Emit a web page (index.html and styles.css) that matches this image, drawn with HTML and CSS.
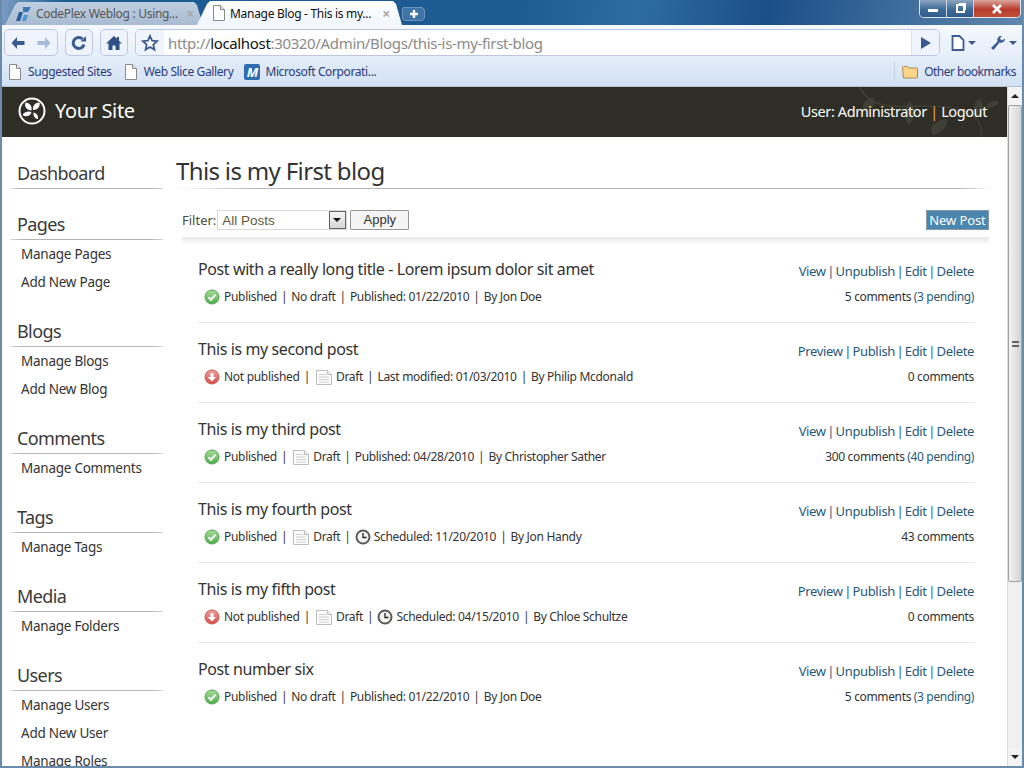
FILE: index.html
```html
<!DOCTYPE html>
<html lang="en">
<head>
  <meta charset="UTF-8" />
  <title>Manage Blog - This is my First blog</title>
  <link rel="stylesheet" href="styles.css">
</head>
<body>
  <svg class="sprites" width="0" height="0">
    <defs>
      <linearGradient id="okFill" x1="0" y1="0" x2="0" y2="1"><stop offset="0" stop-color="#a6dc96"/><stop offset="1" stop-color="#4fae4a"/></linearGradient>
      <linearGradient id="noFill" x1="0" y1="0" x2="0" y2="1"><stop offset="0" stop-color="#f3a09a"/><stop offset="1" stop-color="#da4a44"/></linearGradient>
    </defs>
    <symbol id="page" viewBox="0 0 14 16"><path d="M1.5.5h7l4 4v11h-11z" fill="#fff" stroke="#8a8a8a"/><path d="M8.5.5v4h4" fill="#e8e8e8" stroke="#8a8a8a"/></symbol>
    <symbol id="ok" viewBox="0 0 16 16"><circle cx="8" cy="8" r="7" fill="url(#okFill)" stroke="#5aa355"/><path d="M4.500 8.200l2.500 2.500 4.500-5" fill="none" stroke="#fff" stroke-width="2"/></symbol>
    <symbol id="no" viewBox="0 0 16 16"><circle cx="8" cy="8" r="7" fill="url(#noFill)" stroke="#c25a55"/><path d="M6.500 4h3v4h2.500L8 12.500 3.500 8h3z" fill="#fff"/></symbol>
    <symbol id="draft" viewBox="0 0 16 15"><path d="M.5.5h11l4 4v10H.5z" fill="#fbfbfb" stroke="#bdbdbd"/><path d="M11.500.5v4h4" fill="#eee" stroke="#bdbdbd"/><path d="M3 4.500h7M3 7h10M3 9.500h10M3 12h10" stroke="#cfcfcf"/></symbol>
    <symbol id="clock" viewBox="0 0 16 16"><circle cx="8" cy="8" r="6.500" fill="#f4f4f4" stroke="#5a5a5a" stroke-width="2"/><path d="M8 4v4.500h3.500" fill="none" stroke="#222" stroke-width="1.300"/></symbol>
  </svg>

  <div class="window">
    <div class="titlebar">
      <div class="tab">
        <svg class="tab-icon" width="16" height="16" viewBox="0 0 16 16"><path d="M7 1h8l-3 5H7z" fill="#3b78b5"/><path d="M3 6h4L4 15H0z" fill="#2a5f9c"/><path d="M8 9h4l-2 6H6z" fill="#4f97d1"/></svg>
        <span class="tab-title">CodePlex Weblog : Using...</span>
        <span class="tab-close">×</span>
      </div>
      <div class="tab active">
        <svg class="tab-icon" width="14" height="16"><use href="#page"/></svg>
        <span class="tab-title">Manage Blog - This is my...</span>
        <span class="tab-close">×</span>
      </div>
      <div class="new-tab">
        <svg width="10" height="10" viewBox="0 0 10 10"><path d="M5 1v8M1 5h8" stroke="#fff" stroke-width="2.400"/></svg>
      </div>
      <div class="win-controls">
        <div class="win-btn"><span class="win-min"></span></div>
        <div class="win-btn"><span class="win-max"></span></div>
        <div class="win-btn win-close">
          <svg width="12" height="10" viewBox="0 0 12 10"><path d="M2 1l8 8M10 1l-8 8" stroke="#fff" stroke-width="2.600"/></svg>
        </div>
      </div>
    </div>

    <div class="toolbar">
      <div class="tool-group">
        <div class="tool-btn"><svg width="16" height="14" viewBox="0 0 16 14"><path d="M7 1L1.500 7 7 13V9h7.500V5H7z" fill="#3a5a90"/></svg></div>
        <div class="tool-btn"><svg width="16" height="14" viewBox="0 0 16 14"><path d="M9 1l5.500 6L9 13V9H1.500V5H9z" fill="#a9bbdd"/></svg></div>
      </div>
      <div class="tool-group">
        <div class="tool-btn"><svg width="16" height="16" viewBox="0 0 16 16"><path d="M13 9.500A5.500 5.500 0 1 1 11.500 4" fill="none" stroke="#3a5a90" stroke-width="3"/><path d="M9.500 6.500H15V1z" fill="#3a5a90"/></svg></div>
      </div>
      <div class="tool-group">
        <div class="tool-btn"><svg width="16" height="16" viewBox="0 0 16 16"><path d="M8 1L0 8.500h2.500V15H6.500v-4.500h3V15h4V8.500H16L13 5.700V2h-2v1.800z" fill="#2f4f85"/></svg></div>
      </div>
      <div class="omnibox">
        <div class="star"><svg width="18" height="18" viewBox="0 0 18 18"><path d="M9 2l2.100 4.700 5 .5-3.800 3.400 1.100 5L9 13l-4.400 2.600 1.100-5L1.900 7.200l5-.5z" fill="#fff" stroke="#3a5a90" stroke-width="1.800"/></svg></div>
        <div class="url">http://<b>localhost</b>:30320/Admin/Blogs/this-is-my-first-blog</div>
        <div class="go"><svg width="10" height="12" viewBox="0 0 10 12"><path d="M0 0l10 6-10 6z" fill="#3a5a90"/></svg></div>
      </div>
      <div class="menu-btn">
        <svg width="14" height="16" viewBox="0 0 14 16"><path d="M1.500 1h7l4 4v10h-11z" fill="#fff" stroke="#3a5a90" stroke-width="1.800"/></svg>
        <span class="caret"></span>
      </div>
      <div class="menu-btn">
        <svg width="16" height="16" viewBox="0 0 16 16"><path d="M15 3.500a4 4 0 0 1-5.500 4L3.500 15 1 13l6.500-6.500A4 4 0 0 1 12 1L9.800 3.500l2 2z" fill="#3a5a90"/></svg>
        <span class="caret"></span>
      </div>
    </div>

    <div class="bookmarks">
      <a class="bookmark"><svg width="14" height="16"><use href="#page"/></svg>Suggested Sites</a>
      <a class="bookmark"><svg width="14" height="16"><use href="#page"/></svg>Web Slice Gallery</a>
      <a class="bookmark"><span class="ms-logo">M</span>Microsoft Corporati...</a>
      <a class="bookmark other">
        <svg width="16" height="14" viewBox="0 0 16 14"><path d="M.5 2.500a1 1 0 0 1 1-1h4l1.500 1.500h7.500a1 1 0 0 1 1 1v8a1 1 0 0 1-1 1h-13z" fill="#fbd68a" stroke="#a98a4e"/></svg>
        Other bookmarks
      </a>
    </div>

    <div class="viewport">
      <div class="page">
        <header class="site-header">
          <div class="brand">
            <svg width="28" height="28" viewBox="0 0 28 28">
              <circle cx="14" cy="14" r="12.500" fill="none" stroke="#fff" stroke-width="2"/>
              <path d="M13.500 13.500C9 13 6 10 7.500 5.500c4 .5 7 3.500 6 8zM15 13c-.5-4 2-7.500 6.500-7.500 1 4-2 7.500-6.500 7.500zM13.500 15C10 13.500 6 15 4.500 18c3 2.500 8 1.500 9-3zM15.500 15.500c3 .5 5 3 4.500 6.500-3 0-5-3-4.500-6.500z" fill="#fff"/>
            </svg>
            <span class="site-name">Your Site</span>
          </div>
          <svg class="leaves" width="150" height="50" viewBox="0 0 150 50">
            <path d="M3 0C15 30 60 15 90 20s35 15 35 30" fill="none" stroke="#3f3f36" stroke-width="1.500"/>
            <path d="M8 25C3 18 8 12 17 10c2 8-2 14-9 15zM52 38C45 30 48 20 53 14c6 7 6 17-1 24zM76 48C71 40 78 33 90 32c0 8-5 14-14 16zM120 30c-5-6-4-14 2-18 6 5 6 13-2 18zM128 20c3-5 8-7 14-6-2 5-7 8-14 6z" fill="#3f3f36"/>
          </svg>
          <div class="user-info">User: Administrator <span class="sep">|</span> Logout</div>
        </header>

        <div class="layout">
          <nav class="sidebar">
            <h3>Dashboard</h3>
            <h3>Pages</h3>
            <ul>
              <li>Manage Pages</li>
              <li>Add New Page</li>
            </ul>
            <h3>Blogs</h3>
            <ul>
              <li>Manage Blogs</li>
              <li>Add New Blog</li>
            </ul>
            <h3>Comments</h3>
            <ul>
              <li>Manage Comments</li>
            </ul>
            <h3>Tags</h3>
            <ul>
              <li>Manage Tags</li>
            </ul>
            <h3>Media</h3>
            <ul>
              <li>Manage Folders</li>
            </ul>
            <h3>Users</h3>
            <ul>
              <li>Manage Users</li>
              <li>Add New User</li>
              <li>Manage Roles</li>
            </ul>
          </nav>

          <main class="content">
            <h1>This is my First blog</h1>
            <div class="filter-bar">
              <label>Filter:</label>
              <div class="select">All Posts<span class="select-arrow"></span></div>
              <button class="apply">Apply</button>
              <a class="new-post">New Post</a>
            </div>

            <div class="posts">
              <article class="post">
                <div class="post-line">
                  <h2>Post with a really long title - Lorem ipsum dolor sit amet</h2>
                  <div class="actions">View | Unpublish | Edit | Delete</div>
                </div>
                <div class="post-line">
                  <div class="meta">
                    <svg width="16" height="16"><use href="#ok"/></svg>
                    <span>Published</span><i>|</i><span>No draft</span><i>|</i><span>Published: 01/22/2010</span><i>|</i><span>By Jon Doe</span>
                  </div>
                  <div class="comments">5 comments <a>(3 pending)</a></div>
                </div>
              </article>

              <article class="post">
                <div class="post-line">
                  <h2>This is my second post</h2>
                  <div class="actions">Preview | Publish | Edit | Delete</div>
                </div>
                <div class="post-line">
                  <div class="meta">
                    <svg width="16" height="16"><use href="#no"/></svg>
                    <span>Not published</span><i>|</i><svg class="draft-icon" width="16" height="15"><use href="#draft"/></svg><span>Draft</span><i>|</i><span>Last modified: 01/03/2010</span><i>|</i><span>By Philip Mcdonald</span>
                  </div>
                  <div class="comments">0 comments</div>
                </div>
              </article>

              <article class="post">
                <div class="post-line">
                  <h2>This is my third post</h2>
                  <div class="actions">View | Unpublish | Edit | Delete</div>
                </div>
                <div class="post-line">
                  <div class="meta">
                    <svg width="16" height="16"><use href="#ok"/></svg>
                    <span>Published</span><i>|</i><svg class="draft-icon" width="16" height="15"><use href="#draft"/></svg><span>Draft</span><i>|</i><span>Published: 04/28/2010</span><i>|</i><span>By Christopher Sather</span>
                  </div>
                  <div class="comments">300 comments <a>(40 pending)</a></div>
                </div>
              </article>

              <article class="post">
                <div class="post-line">
                  <h2>This is my fourth post</h2>
                  <div class="actions">View | Unpublish | Edit | Delete</div>
                </div>
                <div class="post-line">
                  <div class="meta">
                    <svg width="16" height="16"><use href="#ok"/></svg>
                    <span>Published</span><i>|</i><svg class="draft-icon" width="16" height="15"><use href="#draft"/></svg><span>Draft</span><i>|</i><svg class="clock-icon" width="16" height="16"><use href="#clock"/></svg><span>Scheduled: 11/20/2010</span><i>|</i><span>By Jon Handy</span>
                  </div>
                  <div class="comments">43 comments</div>
                </div>
              </article>

              <article class="post">
                <div class="post-line">
                  <h2>This is my fifth post</h2>
                  <div class="actions">Preview | Publish | Edit | Delete</div>
                </div>
                <div class="post-line">
                  <div class="meta">
                    <svg width="16" height="16"><use href="#no"/></svg>
                    <span>Not published</span><i>|</i><svg class="draft-icon" width="16" height="15"><use href="#draft"/></svg><span>Draft</span><i>|</i><svg class="clock-icon" width="16" height="16"><use href="#clock"/></svg><span>Scheduled: 04/15/2010</span><i>|</i><span>By Chloe Schultze</span>
                  </div>
                  <div class="comments">0 comments</div>
                </div>
              </article>

              <article class="post">
                <div class="post-line">
                  <h2>Post number six</h2>
                  <div class="actions">View | Unpublish | Edit | Delete</div>
                </div>
                <div class="post-line">
                  <div class="meta">
                    <svg width="16" height="16"><use href="#ok"/></svg>
                    <span>Published</span><i>|</i><span>No draft</span><i>|</i><span>Published: 01/22/2010</span><i>|</i><span>By Jon Doe</span>
                  </div>
                  <div class="comments">5 comments <a>(3 pending)</a></div>
                </div>
              </article>
            </div>
          </main>
        </div>
      </div>

      <div class="scrollbar">
        <div class="scroll-arrow"><span class="arrow-up"></span></div>
        <div class="scroll-thumb"><span class="grip"></span></div>
        <div class="scroll-track"></div>
        <div class="scroll-arrow"><span class="arrow-down"></span></div>
      </div>
    </div>
  </div>
</body>
</html>
```

FILE: styles.css
```css
:root {
  --link: #1f5a7d;
  --text: #333;
  --rule: #b4b4b4;
  --chrome-link: #2a3a7c;
  --chrome-line: #bcc7e4;
}

* {
  margin: 0;
  padding: 0;
  box-sizing: border-box;
}

html, body {
  width: 1024px;
  height: 768px;
  overflow: hidden;
}

body {
  font-family: "Noto Sans", "Open Sans", sans-serif;
  color: var(--text);
  background: #fff;
}

.sprites {
  display: block;
}

.window {
  width: 1024px;
  height: 768px;
  display: flex;
  flex-direction: column;
  border: 1px solid #6b8bad;
  border-width: 0 2px 2px 2px;
  background: #1d5a92;
}

/* window title strip + tabs */
.titlebar {
  height: 25px;
  display: flex;
  align-items: flex-end;
  padding-left: 3px;
  background: linear-gradient(100deg, #7c9dc2 0, #1e5c94 6%, #1d5a92 50%, #2f6ba3 62%, #1a4f88 75%, #5f86ad 100%);
  flex: none;
}

.tab {
  width: 198px;
  height: 23px;
  padding: 0 9px 0 11px;
  display: flex;
  align-items: center;
  gap: 4px;
  font-size: 12px;
  letter-spacing: -0.3px;
  color: #555;
  background: linear-gradient(#c0cfe0, #a8bbd2);
  clip-path: polygon(0 100%, 10px 3px, 13px 0, calc(100% - 9px) 0, calc(100% - 6px) 3px, 100% 100%);
  flex: none;
}

.tab.active {
  width: 205px;
  height: 24px;
  margin-left: -6px;
  padding: 0 12px 0 15px;
  color: #111;
  background: linear-gradient(#fff, #f1f6fd);
}

.tab-title {
  flex: 1;
  white-space: nowrap;
}

.tab-close {
  color: #a9a9a9;
  font-size: 14px;
  font-weight: 700;
}

.tab-icon {
  flex: none;
}

.new-tab {
  width: 23px;
  height: 14px;
  margin: 0 0 4px 0;
  display: flex;
  align-items: center;
  justify-content: center;
  background: #3f74a8;
  border: 1px solid #6c94bb;
  border-radius: 2px 4px 4px 3px;
}

.win-controls {
  display: flex;
  height: 18px;
  margin: 0 0 auto auto;
  border: 1px solid #dfe7ef;
  border-top: 0;
  border-radius: 0 0 5px 5px;
  overflow: hidden;
  margin-right: 1px;
}

.win-btn {
  width: 27px;
  height: 17px;
  display: flex;
  align-items: center;
  justify-content: center;
  background: linear-gradient(#8ea5bf, #3d6a96 55%, #2f5c8a);
  border-right: 1px solid #cdd8e4;
}

.win-close {
  width: 46px;
  border-right: 0;
  background: linear-gradient(#dca59d, #b83c2d 55%, #c0503a);
}

.win-min {
  width: 10px;
  height: 3px;
  margin-top: 3px;
  background: #fff;
}

.win-max {
  width: 9px;
  height: 9px;
  border: 2px solid #fff;
  box-shadow: 2px -2px 0 -1px #fff;
}

/* navigation bar */
.toolbar {
  height: 33px;
  display: flex;
  align-items: center;
  padding: 2px 2px 0 2px;
  gap: 7px;
  background: linear-gradient(#f5f8fe, #e6eefa);
  flex: none;
}

.tool-group {
  display: flex;
  height: 27px;
  background: #eef3fc;
  border: 1px solid var(--chrome-line);
  border-radius: 5px;
}

.tool-btn {
  width: 26px;
  display: flex;
  align-items: center;
  justify-content: center;
}

.omnibox {
  flex: 1;
  height: 27px;
  display: flex;
  align-items: center;
  background: #fff;
  border: 1px solid var(--chrome-line);
  border-radius: 5px;
  overflow: hidden;
}

.star {
  width: 28px;
  height: 100%;
  display: flex;
  align-items: center;
  justify-content: center;
  background: #eef3fc;
}

.url {
  flex: 1;
  padding-left: 4px;
  font-size: 15px;
  letter-spacing: -0.34px;
  color: #8a8a8a;
  white-space: nowrap;
}

.url b {
  color: #111;
  font-weight: 400;
}

.go {
  width: 28px;
  height: 100%;
  display: flex;
  align-items: center;
  justify-content: center;
  background: #eef3fc;
  border-left: 1px solid #dbe3f3;
}

.menu-btn {
  width: 33px;
  display: flex;
  align-items: center;
  justify-content: center;
  gap: 3px;
}

.caret {
  border: 4px solid transparent;
  border-top-color: #3a5a90;
  border-bottom: 0;
}

/* bookmarks */
.bookmarks {
  height: 29px;
  display: flex;
  align-items: center;
  padding: 0 6px 1px 6px;
  gap: 12px;
  background: linear-gradient(#e4edf9, #d2e1f5);
  border-bottom: 1px solid #b6bfca;
  flex: none;
}

.bookmark {
  display: flex;
  align-items: center;
  gap: 6px;
  font-size: 12px;
  letter-spacing: -0.38px;
  color: var(--chrome-link);
  white-space: nowrap;
}

.bookmark.other {
  margin-left: auto;
  padding-left: 7px;
  border-left: 1px solid #c5d3e6;
  height: 19px;
  letter-spacing: -0.5px;
}

.ms-logo {
  width: 16px;
  height: 16px;
  margin: 0 -1px;
  background: #2f6cb0;
  color: #fff;
  border-radius: 2px;
  font-size: 13px;
  font-weight: 700;
  font-style: italic;
  line-height: 16px;
  text-align: center;
}

/* page */
.viewport {
  flex: 1;
  min-height: 0;
  display: flex;
  background: #fff;
}

.page {
  flex: 1;
  min-width: 0;
  overflow: hidden;
}

.site-header {
  height: 50px;
  position: relative;
  display: flex;
  align-items: center;
  justify-content: space-between;
  padding: 0 20px 3px 16px;
  background: #2e2e26;
  color: #fff;
}

.brand {
  display: flex;
  align-items: center;
  gap: 9px;
}

.site-name {
  font-size: 20px;
  letter-spacing: -0.35px;
}

.user-info {
  position: relative;
  font-size: 14.500px;
  letter-spacing: -0.4px;
}

.sep {
  color: #e6a94f;
}

.leaves {
  position: absolute;
  right: 0;
  top: 0;
}

.layout {
  display: flex;
  align-items: flex-start;
}

.sidebar {
  width: 153px;
  margin: 22px 13px 0 8px;
  flex: none;
}

.sidebar h3 {
  font-size: 18px;
  font-weight: 400;
  line-height: 29px;
  padding-left: 7px;
  margin-top: 21px;
  letter-spacing: -0.6px;
  color: #3a3a3a;
  border-bottom: 1px solid;
  border-image: linear-gradient(90deg, #ddd, var(--rule) 8%, var(--rule) 92%, #ddd) 1;
}

.sidebar h3:first-child {
  margin-top: 0;
}

.sidebar ul {
  list-style: none;
}

.sidebar li {
  font-size: 13.500px;
  line-height: 28px;
  padding-left: 11px;
  letter-spacing: -0.25px;
  color: #333;
  white-space: nowrap;
}

.content {
  width: 815px;
  flex: none;
}

h1 {
  font-size: 24px;
  font-weight: 400;
  line-height: 33px;
  margin-top: 17px;
  letter-spacing: -0.65px;
  color: #333;
  padding-bottom: 1px;
  border-bottom: 1px solid;
  border-image: linear-gradient(90deg, #fff, var(--rule) 10%, var(--rule) 96%, #fff) 1;
}

.filter-bar {
  height: 49px;
  margin: 0 2px 0 6px;
  padding: 21px 0 7px;
  display: flex;
  align-items: center;
  border-bottom: 1px solid #aaa;
  font-size: 13px;
  position: relative;
}

.filter-bar::after {
  content: "";
  position: absolute;
  left: 0;
  right: 0;
  top: 100%;
  height: 8px;
  background: linear-gradient(#e8e8e8, #fff);
}

.filter-bar label {
  color: #4c4c2f;
  margin-right: 1px;
}

.select {
  width: 130px;
  height: 20px;
  position: relative;
  padding-left: 4px;
  font-family: "Liberation Sans", sans-serif;
  font-size: 13.500px;
  line-height: 19px;
  color: #5f5a3a;
  border: 1px solid #d8d8d8;
  background: #fff;
}

.select-arrow {
  position: absolute;
  right: 0;
  top: 0;
  width: 17px;
  height: 18px;
  background: linear-gradient(#f4f4f4, #d8d8d8);
  border: 1px solid #666;
}

.select-arrow::after {
  content: "";
  position: absolute;
  left: 3px;
  top: 6px;
  border: 4px solid transparent;
  border-top: 4px solid #111;
  border-bottom: 0;
}

.apply {
  width: 59px;
  height: 20px;
  margin-left: 3px;
  font-family: "Liberation Sans", sans-serif;
  font-size: 13px;
  color: #333;
  background: #f4f4f4;
  border: 1px solid #999;
  border-radius: 1px;
  line-height: 16px;
}

.new-post {
  margin-left: auto;
  width: 63px;
  height: 20px;
  text-align: center;
  font-size: 13px;
  line-height: 18px;
  letter-spacing: -0.1px;
  color: #fff;
  background: #4a86ad;
  border: 1px solid #8a9aa5;
}

.posts {
  margin: 5px 17px 0 22px;
}

.post {
  height: 80px;
  padding-top: 15px;
  border-bottom: 1px solid #e8e8e8;
}

.post:last-child {
  border-bottom: 0;
}

.post-line {
  display: flex;
  align-items: center;
  justify-content: space-between;
}

.post-line + .post-line {
  margin-top: 6px;
}

h2 {
  font-size: 16px;
  font-weight: 400;
  line-height: 22px;
  letter-spacing: -0.4px;
  color: #333;
}

.actions {
  padding-top: 4px;
  font-size: 13px;
  letter-spacing: -0.35px;
  word-spacing: -1.5px;
  color: var(--link);
}

.meta {
  display: flex;
  align-items: center;
  padding-left: 6px;
  font-size: 12px;
  letter-spacing: -0.3px;
  line-height: 22px;
}

.meta svg {
  flex: none;
  margin-right: 4px;
}

.meta i {
  font-style: normal;
  margin: 0 4px;
}

.meta .draft-icon {
  margin-left: 2px;
}

.meta .clock-icon {
  margin-right: 3px;
}

.comments {
  padding-bottom: 2px;
  font-size: 12px;
  letter-spacing: -0.35px;
}

.comments a {
  color: var(--link);
}

/* scrollbar */
.scrollbar {
  width: 15px;
  flex: none;
  display: flex;
  flex-direction: column;
  background: #f0f0f0;
  border-left: 1px solid #dcdcdc;
}

.scroll-arrow {
  height: 18px;
  flex: none;
  display: flex;
  align-items: center;
  justify-content: center;
  background: #f3f3f3;
}

.arrow-up {
  border: 4px solid transparent;
  border-bottom-color: #222;
  border-top: 0;
}

.arrow-down {
  border: 4px solid transparent;
  border-top-color: #222;
  border-bottom: 0;
}

.scroll-thumb {
  height: 477px;
  flex: none;
  display: flex;
  align-items: center;
  justify-content: center;
  background: linear-gradient(90deg, #f4f4f4, #d4d4d4);
  border: 1px solid #a0a0a0;
  border-radius: 2px;
}

.grip {
  width: 7px;
  height: 6px;
  border-top: 2px solid #666;
  border-bottom: 2px solid #666;
}

.scroll-track {
  flex: 1;
}
```
